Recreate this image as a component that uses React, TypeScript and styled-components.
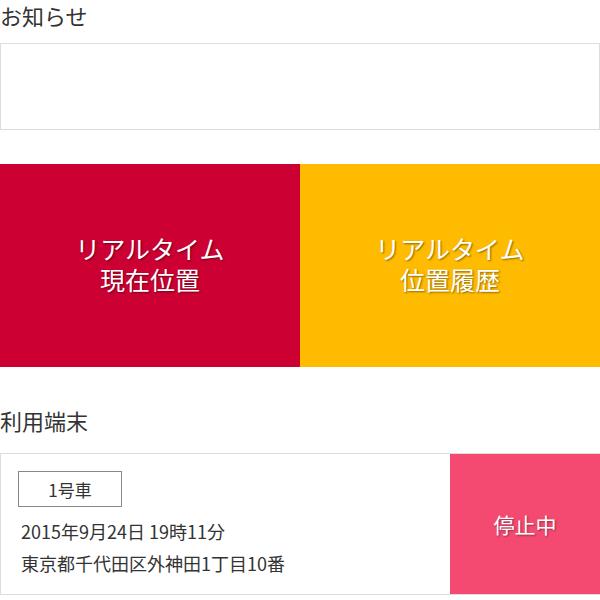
import React from 'react';
import styled, { createGlobalStyle } from 'styled-components';

const GlobalStyle = createGlobalStyle`
  body {
    margin: 0;
    background: #fff;
    font-family: 'Noto Sans CJK JP', 'Noto Sans', sans-serif;
    color: #333;
  }
`;

function App(): React.ReactElement {
  return (
    <>
      <GlobalStyle />
      <Page>
        <Heading>お知らせ</Heading>
        <NoticeBox />
        <PanelRow>
          <Panel color="#cc0033">
            リアルタイム
            <br />
            現在位置
          </Panel>
          <Panel color="#ffbb00">
            リアルタイム
            <br />
            位置履歴
          </Panel>
        </PanelRow>
        <Heading>利用端末</Heading>
        <DeviceCard>
          <DeviceInfo>
            <Badge>1号車</Badge>
            <InfoLine>2015年9月24日 19時11分</InfoLine>
            <InfoLine>東京都千代田区外神田1丁目10番</InfoLine>
          </DeviceInfo>
          <Status>停止中</Status>
        </DeviceCard>
      </Page>
    </>
  );
}

export default App;

const Page = styled.div`
  width: 600px;
  display: flex;
  flex-direction: column;
`;

const Heading = styled.div`
  font-size: 22px;
  line-height: 30px;
  color: #333;
  margin-bottom: 13px;
`;

const NoticeBox = styled.div`
  height: 85px;
  border: 1px solid #ddd;
  margin-bottom: 34px;
`;

const PanelRow = styled.div`
  display: flex;
  margin-bottom: 38px;
`;

const Panel = styled.div<{ color: string }>`
  flex: 1;
  height: 203px;
  background: ${(p) => p.color};
  color: #fff;
  display: flex;
  align-items: center;
  justify-content: center;
  text-align: center;
  font-size: 25px;
  line-height: 31px;
  padding-bottom: 4px;
  box-sizing: border-box;
  text-shadow: 1px 1px 2px rgba(0, 0, 0, 0.45);
`;

const DeviceCard = styled.div`
  display: flex;
  height: 140px;
  margin-top: 5px;
  border: 1px solid #ddd;
  border-right: none;
`;

const DeviceInfo = styled.div`
  flex: 1;
  padding: 17px 0 0 17px;
  display: flex;
  flex-direction: column;
  align-items: flex-start;
`;

const Badge = styled.div`
  width: 102px;
  height: 34px;
  border: 1px solid #888;
  display: flex;
  align-items: center;
  justify-content: center;
  font-size: 17px;
  color: #333;
  margin-bottom: 8px;
`;

const InfoLine = styled.div`
  font-size: 18px;
  line-height: 32px;
  padding-left: 3px;
  color: #333;
`;

const Status = styled.div`
  width: 150px;
  background: #f44a72;
  color: #fff;
  display: flex;
  align-items: center;
  justify-content: center;
  font-size: 21px;
  text-shadow: 1px 1px 2px rgba(0, 0, 0, 0.4);
`;
